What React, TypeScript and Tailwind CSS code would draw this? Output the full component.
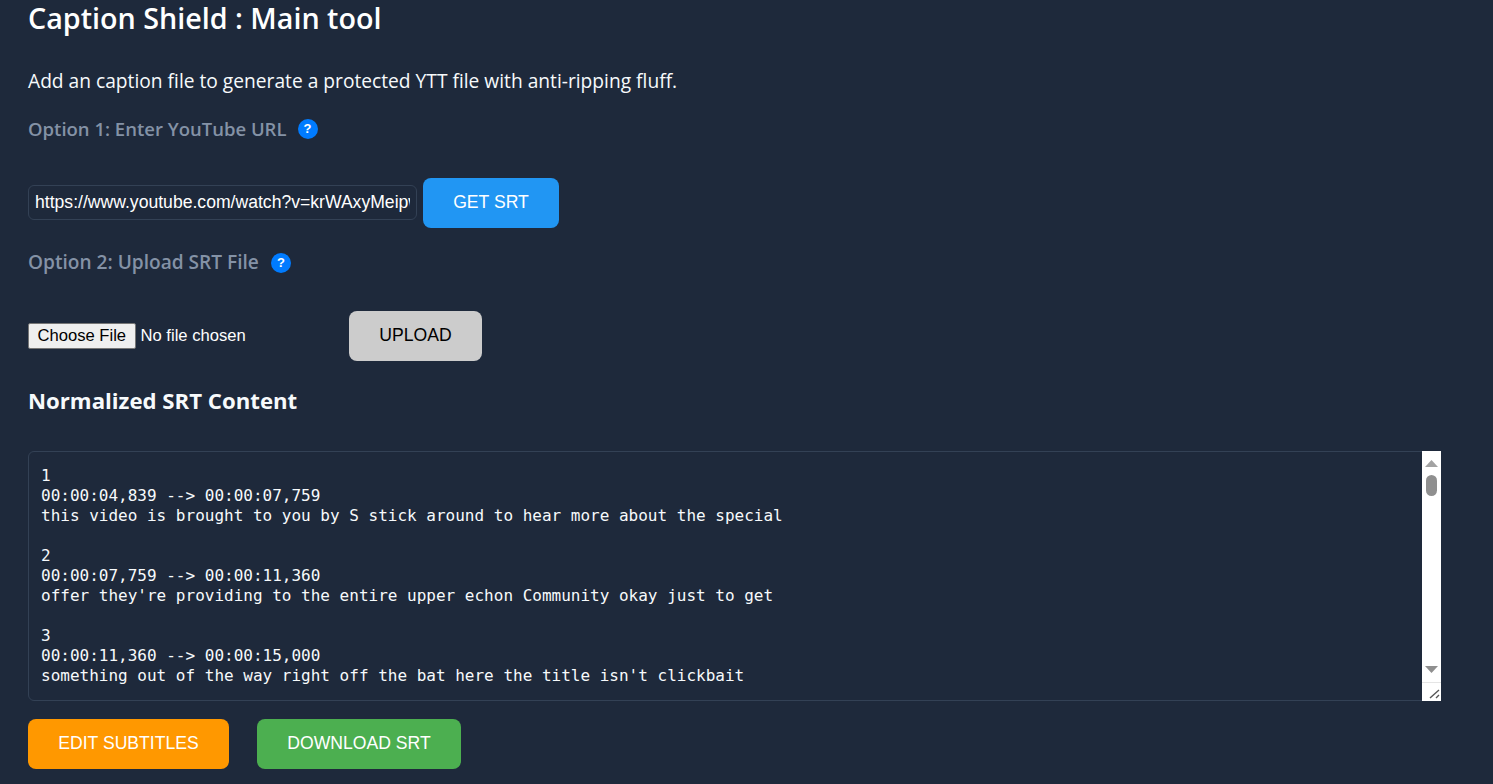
import React from 'react';

const srtText = `1
00:00:04,839 --> 00:00:07,759
this video is brought to you by S stick around to hear more about the special

2
00:00:07,759 --> 00:00:11,360
offer they're providing to the entire upper echon Community okay just to get

3
00:00:11,360 --> 00:00:15,000
something out of the way right off the bat here the title isn't clickbait

4
00:00:15,000 --> 00:00:18,480
and this is a long one so stick around`;

const HelpBadge = () => (
  <span className="flex h-5 w-5 items-center justify-center rounded-full bg-[#007bff] font-['Liberation_Sans',sans-serif] text-[13px] font-bold leading-none text-white">
    ?
  </span>
);

const OptionLabel = ({ children, className = '' }: { children: React.ReactNode; className?: string }) => (
  <div className={`flex h-[27px] items-center font-semibold text-[#8492a6] ${className}`}>
    <span>{children}</span>
    <HelpBadge />
  </div>
);

const actionBtn =
  "h-[50px] rounded-[8px] font-['Liberation_Sans',sans-serif] text-[17.6px] leading-none";

export default function App() {
  return (
    <div className="h-[784px] overflow-hidden bg-[#1e293b] pl-[28px] font-['Open_Sans',sans-serif] text-white">
      <h1 className="h-[36px] text-[28.7px] font-semibold leading-[36px]">
        Caption Shield : Main tool
      </h1>

      <p className="mt-[32px] flex h-[27px] items-center text-[19.2px] text-[#f7fafc]">
        Add an caption file to generate a protected YTT file with anti-ripping fluff.
      </p>

      <div className="mt-[20px]">
        <OptionLabel className="gap-[11px] text-[18.5px]">Option 1: Enter YouTube URL</OptionLabel>
      </div>

      <div className="mt-[36px] flex items-start gap-[6px]">
        <input
          readOnly
          value="https://www.youtube.com/watch?v=krWAxyMeipw"
          className="mt-[7px] h-[35px] w-[389px] rounded-[6px] border border-[#334155] bg-transparent px-[6px] font-['Liberation_Sans',sans-serif] text-[17.6px] text-white outline-none"
        />
        <button className={`${actionBtn} w-[136px] bg-[#2196f3] text-white`}>GET SRT</button>
      </div>

      <div className="mt-[21px]">
        <OptionLabel className="gap-[12px] text-[19.1px]">Option 2: Upload SRT File</OptionLabel>
      </div>

      <div className="mt-[35px] flex items-center">
        <input
          type="file"
          className="w-[321px] font-['Liberation_Sans',sans-serif] text-[16.6px] text-white file:mr-[5px] file:h-[26px] file:rounded-[2px] file:border file:border-[#767676] file:bg-[#efefef] file:px-[8.5px] file:text-[16.6px] file:text-black"
        />
        <button className={`${actionBtn} w-[133px] bg-[#cccccc] text-black`}>UPLOAD</button>
      </div>

      <h2 className="mt-[26px] flex h-[28px] items-center text-[22.2px] font-bold leading-none text-[#f7fafc]">
        Normalized SRT Content
      </h2>

      <div className="relative mt-[36px] h-[250px] w-[1413px] rounded-[6px] border border-[#334155]">
        <textarea
          readOnly
          value={srtText}
          className="block h-full w-full resize-none overflow-hidden bg-transparent pl-[12px] pr-[24px] pt-[14px] font-['DejaVu_Sans_Mono',monospace] text-[16px] leading-[20px] text-[#f7fafc] outline-none"
        />
        {/* hand-drawn classic scrollbar, the headless one looks different */}
        <div className="absolute -inset-y-px -right-px flex w-[19px] flex-col items-center bg-white">
          <svg width="19" height="17" viewBox="0 0 19 17" className="mt-[4px] shrink-0">
            <path d="M9.5 5 L16 12 L3 12 Z" fill="#a3a3a3" />
          </svg>
          <div className="mt-[3px] h-[21px] w-[11px] rounded-full bg-[#8f8f8f]" />
          <svg width="19" height="17" viewBox="0 0 19 17" className="mb-[4px] mt-auto shrink-0">
            <path d="M3 5 L16 5 L9.5 12 Z" fill="#8f8f8f" />
          </svg>
          <div className="flex h-[19px] w-full items-end justify-end border-t border-[#e5e5e5]">
            <svg width="14" height="14" viewBox="0 0 14 14">
              <path d="M3 11 L12 3 M9 11 L12 8" stroke="#555555" strokeWidth="1.4" fill="none" />
            </svg>
          </div>
        </div>
      </div>

      <div className="mt-[18px] flex gap-[28px]">
        <button className={`${actionBtn} w-[201px] bg-[#ff9800] text-white`}>EDIT SUBTITLES</button>
        <button className={`${actionBtn} w-[204px] bg-[#4caf50] text-white`}>DOWNLOAD SRT</button>
      </div>
    </div>
  );
}
